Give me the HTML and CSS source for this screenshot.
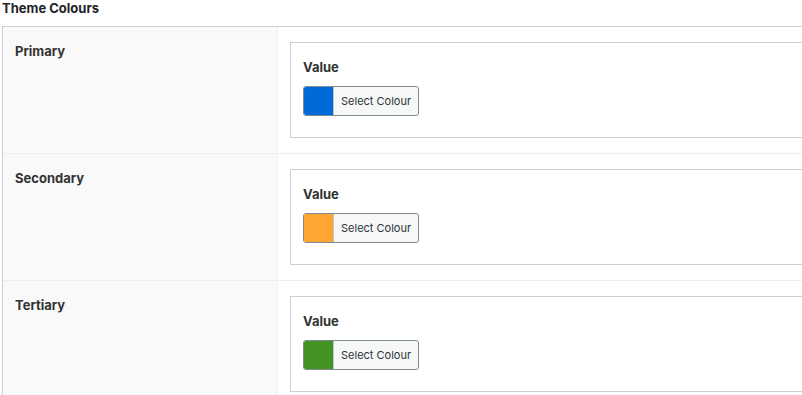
FILE: index.html
```html
<!DOCTYPE html>
<html lang="en">
<head>
    <meta charset="UTF-8">
    <meta name="viewport" content="width=device-width, initial-scale=1.0">
    <title>Theme Colours</title>
    <link rel="stylesheet" href="styles.css">
</head>
<body>
    <div class="page">
        <h3 class="section-title">Theme Colours</h3>

        <div class="fields">
            <div class="field-row">
                <div class="field-label">Primary</div>
                <div class="field-input">
                    <div class="group-box">
                        <div class="sub-label">Value</div>
                        <button class="colour-btn" type="button">
                            <span class="swatch swatch-blue"></span>
                            <span class="btn-text">Select Colour</span>
                        </button>
                    </div>
                </div>
            </div>

            <div class="field-row">
                <div class="field-label">Secondary</div>
                <div class="field-input">
                    <div class="group-box">
                        <div class="sub-label">Value</div>
                        <button class="colour-btn" type="button">
                            <span class="swatch swatch-orange"></span>
                            <span class="btn-text">Select Colour</span>
                        </button>
                    </div>
                </div>
            </div>

            <div class="field-row">
                <div class="field-label">Tertiary</div>
                <div class="field-input">
                    <div class="group-box">
                        <div class="sub-label">Value</div>
                        <button class="colour-btn" type="button">
                            <span class="swatch swatch-green"></span>
                            <span class="btn-text">Select Colour</span>
                        </button>
                    </div>
                </div>
            </div>
        </div>
    </div>
</body>
</html>
```

FILE: styles.css
```css
* {
    margin: 0;
    padding: 0;
    box-sizing: border-box;
}

html, body {
    overflow: hidden;
}

body {
    background: #fff;
    color: #1d2327;
    font-family: Inter, "Liberation Sans", sans-serif;
    font-size: 13px;
}

/* the table runs wider than the window, like the original screen */
.page {
    width: 900px;
    padding-left: 2px;
}

.section-title {
    font-size: 13px;
    font-weight: 700;
    line-height: 16px;
    margin-bottom: 10px;
}

.fields {
    border-top: 1px solid #ccd0d4;
    border-left: 1px solid #ccd0d4;
}

.field-row {
    display: flex;
    border-bottom: 1px solid #eeeeee;
}

.field-label {
    width: 275px;
    flex-shrink: 0;
    background: #f9f9f9;
    border-right: 1px solid #eeeeee;
    padding: 15px 12px;
    font-weight: 700;
    line-height: 18px;
    color: #333;
}

.field-input {
    flex: 1;
    padding: 15px 12px;
}

.group-box {
    border: 1px solid #ccd0d4;
    padding: 15px 12px 21px;
}

.sub-label {
    font-weight: 700;
    line-height: 18px;
    margin-bottom: 10px;
    color: #333;
}

.colour-btn {
    display: flex;
    align-items: stretch;
    height: 30px;
    border: 1px solid #7e8993;
    border-radius: 3px;
    background: #f6f7f7;
    overflow: hidden;
    font-family: inherit;
    cursor: pointer;
}

.swatch {
    width: 30px;
    border-right: 1px solid #c3c4c7;
}

.swatch-blue {
    background: #006bd6;
}

.swatch-orange {
    background: #ffa633;
}

.swatch-green {
    background: #449222;
}

.btn-text {
    display: flex;
    align-items: center;
    padding: 0 7px;
    font-size: 11px;
    color: #2c3338;
}
```
